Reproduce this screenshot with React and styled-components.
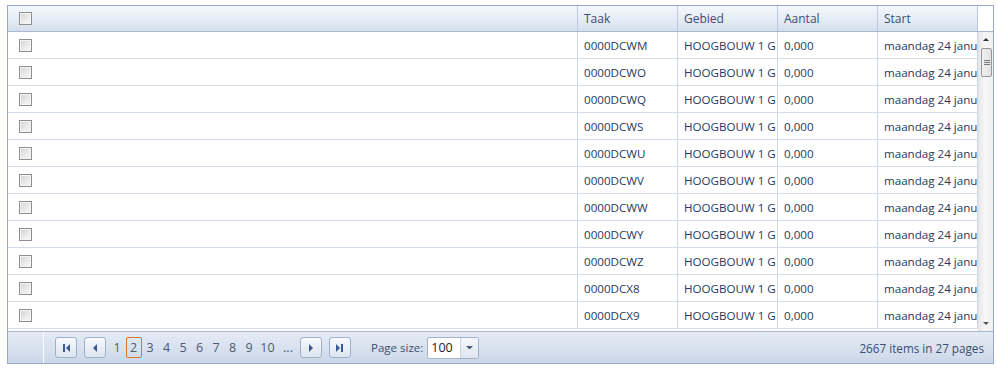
import styled, { createGlobalStyle } from "styled-components";

const GlobalStyle = createGlobalStyle`
  body {
    margin: 0;
    background: #fff;
    font-family: "Open Sans", "Noto Sans", sans-serif;
    font-size: 12px;
  }
`;

const Grid = styled.div`
  margin: 5px 0 0 7px;
  width: 985px;
  border: 1px solid #98a7c2;
  display: flex;
  flex-direction: column;
`;

const HeaderRow = styled.div`
  display: flex;
  height: 25px;
  border-bottom: 1px solid #a9b8d1;
  background: #fff;
`;

const HeaderCell = styled.div`
  box-sizing: border-box;
  width: ${(p) => p.$w}px;
  padding-left: ${(p) => (p.$check ? 11 : 6)}px;
  display: flex;
  align-items: center;
  background: linear-gradient(#f5f8fc 0%, #e8eef6 45%, #d5dfed 100%);
  border-right: 1px solid #bcc8dc;
  color: #3b4d70;
  white-space: nowrap;
  overflow: hidden;
`;

const Body = styled.div`
  display: flex;
  height: 299px;
  overflow: hidden;
`;

const Rows = styled.div`
  width: 970px;
`;

const Row = styled.div`
  display: flex;
  height: 26px;
  border-bottom: 1px solid #d3dbec;
`;

const Cell = styled.div`
  box-sizing: border-box;
  width: ${(p) => p.$w}px;
  padding-left: ${(p) => (p.$check ? 11 : 6)}px;
  display: flex;
  align-items: center;
  border-right: 1px solid #cdd6ea;
  color: #263a61;
  font-size: 11.6px;
  white-space: nowrap;
  overflow: hidden;
`;

const Check = styled.span`
  box-sizing: border-box;
  display: inline-block;
  width: 13px;
  height: 13px;
  border: 1px solid #8f8f8f;
  box-shadow: inset 0 0 0 1px #f4f4f4;
  background: linear-gradient(135deg, #d2d2d2 0%, #ececec 60%, #f7f7f7 100%);
`;

const Scrollbar = styled.div`
  width: 15px;
  display: flex;
  flex-direction: column;
  background: linear-gradient(90deg, #e9e9e9, #f6f6f6 40%, #f0f0f0);
  border-left: 1px solid #e3e3e3;
`;

const ScrollArrow = styled.div`
  height: 15px;
  display: flex;
  align-items: center;
  justify-content: center;
`;

const Thumb = styled.div`
  box-sizing: border-box;
  margin: 1px 1px 0 2px;
  height: 29px;
  border: 1px solid #979797;
  border-radius: 2px;
  background: linear-gradient(90deg, #f2f2f2, #e0e0e0);
  display: flex;
  flex-direction: column;
  align-items: center;
  justify-content: center;
  gap: 1px;

  span {
    width: 6px;
    height: 1px;
    background: #777;
  }
`;

const Track = styled.div`
  flex: 1;
`;

const Pager = styled.div`
  display: flex;
  align-items: center;
  height: 31px;
  border-top: 1px solid #a8b7cf;
  background: linear-gradient(#e4ebf5 0%, #d6e0ee 60%, #cad7e9 100%);
  color: #44547a;
`;

const PagerLead = styled.div`
  align-self: stretch;
  width: 35px;
  border-right: 1px solid #fbfcfe;
  margin-right: 11px;
`;

const NavButton = styled.button`
  box-sizing: border-box;
  width: 22px;
  height: 21px;
  margin: 0 ${(p) => p.$gap ?? 7}px 0 ${(p) => p.$lead ?? 0}px;
  padding: 0;
  border: 1px solid #9fb0ca;
  border-radius: 3px;
  background: linear-gradient(#f7f9fc, #dde5f1);
  display: flex;
  align-items: center;
  justify-content: center;
`;

const Pages = styled.div`
  display: flex;
  gap: 0.5px;
`;

const PageLink = styled.span`
  box-sizing: border-box;
  min-width: ${(p) => p.$w ?? 16}px;
  height: 21px;
  display: flex;
  align-items: center;
  justify-content: center;
  font-size: 12.5px;
  color: #4d5a72;
  border: 1px solid ${(p) => (p.$active ? "#d9782c" : "transparent")};
  border-radius: 2px;
`;

const SizeLabel = styled.span`
  margin: 0 4px 0 20px;
  font-size: 11.5px;
  color: #3d4e71;
`;

const Select = styled.div`
  box-sizing: border-box;
  width: 52px;
  height: 22px;
  display: flex;
  border: 1px solid #a3b2c9;
  border-radius: 2px;
  background: #fff;
  font-size: 12.5px;
  color: #222;
`;

const SelectValue = styled.span`
  flex: 1;
  padding-left: 3px;
  display: flex;
  align-items: center;
`;

const SelectArrow = styled.span`
  width: 17px;
  display: flex;
  align-items: center;
  justify-content: center;
  border-left: 1px solid #c8d2e2;
  background: linear-gradient(#f5f7fb, #dfe6f0);
`;

const Info = styled.span`
  margin-left: auto;
  padding-right: 9px;
  font-size: 11.7px;
  color: #3d4e71;
`;

const cols = [570, 100, 100, 100, 100];
const codes = ["WM", "WO", "WQ", "WS", "WU", "WV", "WW", "WY", "WZ", "X8", "X9"];

const Tri = ({ dir = "right", size = 4, color = "#3b5894" }) => {
  const pts = {
    right: `0,0 ${size},${size} 0,${size * 2}`,
    left: `${size},0 0,${size} ${size},${size * 2}`,
    up: `0,${size} ${size},0 ${size * 2},${size}`,
    down: `0,0 ${size * 2},0 ${size},${size}`,
  }[dir];
  const vertical = dir === "up" || dir === "down";
  return (
    <svg width={vertical ? size * 2 : size} height={vertical ? size : size * 2}>
      <polygon points={pts} fill={color} />
    </svg>
  );
};

const Bar = () => (
  <svg width="2" height="8" style={{ margin: "0 1px" }}>
    <rect width="2" height="8" fill="#3b5894" />
  </svg>
);

export default function App() {
  return (
    <>
      <GlobalStyle />
      <Grid>
        <HeaderRow>
          <HeaderCell $w={cols[0]} $check>
            <Check />
          </HeaderCell>
          <HeaderCell $w={cols[1]}>Taak</HeaderCell>
          <HeaderCell $w={cols[2]}>Gebied</HeaderCell>
          <HeaderCell $w={cols[3]}>Aantal</HeaderCell>
          <HeaderCell $w={cols[4]}>Start</HeaderCell>
        </HeaderRow>
        <Body>
          <Rows>
            {codes.map((c) => (
              <Row key={c}>
                <Cell $w={cols[0]} $check>
                  <Check />
                </Cell>
                <Cell $w={cols[1]}>0000DC{c}</Cell>
                <Cell $w={cols[2]}>HOOGBOUW 1 G</Cell>
                <Cell $w={cols[3]}>0,000</Cell>
                <Cell $w={cols[4]}>maandag 24 janu</Cell>
              </Row>
            ))}
          </Rows>
          <Scrollbar>
            <ScrollArrow>
              <Tri dir="up" size={3} color="#333" />
            </ScrollArrow>
            <Thumb>
              <span />
              <span />
              <span />
            </Thumb>
            <Track />
            <ScrollArrow>
              <Tri dir="down" size={3} color="#555" />
            </ScrollArrow>
          </Scrollbar>
        </Body>
        <Pager>
          <PagerLead />
          <NavButton>
            <Bar />
            <Tri dir="left" />
          </NavButton>
          <NavButton $gap={3}>
            <Tri dir="left" />
          </NavButton>
          <Pages>
            {["1", "2", "3", "4", "5", "6", "7", "8", "9"].map((n) => (
              <PageLink key={n} $active={n === "2"}>
                {n}
              </PageLink>
            ))}
            <PageLink $w={20}>10</PageLink>
            <PageLink $w={20}>...</PageLink>
          </Pages>
          <NavButton $lead={2}>
            <Tri dir="right" />
          </NavButton>
          <NavButton $gap={0}>
            <Tri dir="right" />
            <Bar />
          </NavButton>
          <SizeLabel>Page size:</SizeLabel>
          <Select>
            <SelectValue>100</SelectValue>
            <SelectArrow>
              <Tri dir="down" size={3.5} color="#4a5a7c" />
            </SelectArrow>
          </Select>
          <Info>2667 items in 27 pages</Info>
        </Pager>
      </Grid>
    </>
  );
}
